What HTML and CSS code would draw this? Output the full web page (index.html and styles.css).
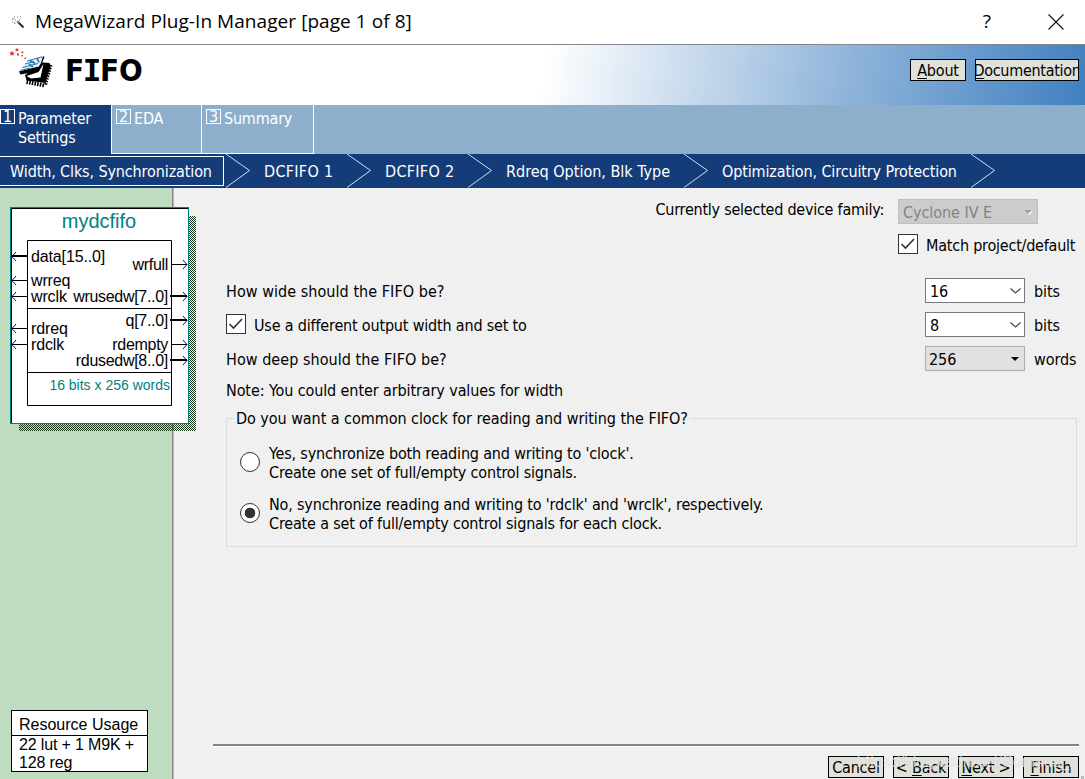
FILE: index.html
```html
<!DOCTYPE html>
<html lang="en">
<head>
    <meta charset="UTF-8">
    <meta name="viewport" content="width=device-width, initial-scale=1.0">
    <title>MegaWizard Plug-In Manager</title>
    <link rel="stylesheet" href="styles.css">
</head>
<body>

    <div class="titlebar">
        <svg class="wand" width="14" height="14" viewBox="0 0 14 14">
            <path d="M5.5 6.500L11.500 12.500" stroke="#222" stroke-width="1.8"/>
            <path d="M5 6l2 2" stroke="#999966" stroke-width="1.4"/>
            <path d="M0 4h2M3 5h1M2 8h1.500M0 7h1M7 5h1M8 2h1M5 2h1M2 2h1" stroke="#865" stroke-width="1.200"/>
        </svg>
        <span class="title">MegaWizard Plug-In Manager [page 1 of 8]</span>
        <span class="help">?</span>
        <svg class="close" width="16" height="16" viewBox="0 0 16 16">
            <path d="M.5 .5l15 15M15.5 .5l-15 15" stroke="#111" stroke-width="1.1"/>
        </svg>
    </div>

    <div class="header">
        <svg class="logo" width="48" height="46" viewBox="0 0 48 46">
            <g fill="#d93a20">
                <path d="M4 2.500l.8 1.900 2 .2-1.500 1.300.5 2L4 6.800l-1.800 1.100.5-2-1.500-1.300 2-.2z"/>
                <path d="M9 -.5l.6 1.500 1.500.1-1.100 1 .3 1.600-1.300-.9-1.400.9.3-1.600-1.100-1 1.600-.1z"/>
                <path d="M9 5.500h2v2H9zM13.500 3.500h1.800v1.800h-1.800zM13.500 7h1.500v1.500h-1.500zM16.500 9.500h1.500v1.500h-1.500z"/>
            </g>
            <path d="M35 14.500l6.500.5 1 3.500-5 16.500-19-2.500-1.500-5.500z" fill="#000"/>
            <path d="M43 17l-5.500 20" stroke="#000" stroke-width="3" stroke-dasharray="1.500 1.200"/>
            <path d="M18.500 34l18 3.500" stroke="#000" stroke-width="4" stroke-dasharray="1.600 1.100"/>
            <path d="M18.500 28l12-4 5-8-3 13.500-9.500 1z" fill="#fff"/>
            <path d="M11 23.500l21-6 3-9.200 1.500.7-5.500 14L12.500 26.500z" fill="#000"/>
            <path d="M18.700 13l16-4.500-3.700 10-19.500 4.500z" fill="#e8f4fb"/>
            <path d="M19 13l15.500-4.300M17 16l9-2.500M14.500 19.500l15.500-4M12.500 22.500l10-2.500" stroke="#2878b0" stroke-width="1.100" fill="none"/>
            <path d="M22 12.500l5 3M29 10l2 4.500M21 16l4 3" stroke="#2878b0" stroke-width="1.800" fill="none"/>
        </svg>
        <h1>F<span class="slab">I</span>FO</h1>
        <div class="header-buttons">
            <button class="btn"><u>A</u>bout</button>
            <button class="btn btn-doc"><u>D</u>ocumentation</button>
        </div>
    </div>

    <div class="tabs">
        <div class="tab tab-active"><span class="num">1</span><span>Parameter<br>Settings</span></div>
        <div class="tab tab-eda"><span class="num">2</span><span>EDA</span></div>
        <div class="tab tab-summary"><span class="num">3</span><span>Summary</span></div>
    </div>

    <div class="steps">
        <div class="step step-active">Width, Clks, Synchronization</div>
        <svg class="arrow" width="25" height="34"><path d="M0 0l23.500 16.500L0 33.500"/></svg>
        <div class="step step-dcfifo">DCFIFO 1</div>
        <svg class="arrow" width="25" height="34"><path d="M0 0l23.500 16.500L0 33.500"/></svg>
        <div class="step step-dcfifo">DCFIFO 2</div>
        <svg class="arrow" width="25" height="34"><path d="M0 0l23.500 16.500L0 33.500"/></svg>
        <div class="step step-rdreq">Rdreq Option, Blk Type</div>
        <svg class="arrow" width="25" height="34"><path d="M0 0l23.500 16.500L0 33.500"/></svg>
        <div class="step step-optim">Optimization, Circuitry Protection</div>
        <svg class="arrow" width="25" height="34"><path d="M0 0l23.500 16.500L0 33.500"/></svg>
    </div>

    <div class="main">
        <div class="sidebar">
            <svg class="block" width="186" height="224" viewBox="10 207 186 224">
                <defs>
                    <pattern id="dots" width="2" height="2" patternUnits="userSpaceOnUse">
                        <path d="M0 0h1v1H0zM1 1h1v1H1z" fill="#1c3a1c"/>
                    </pattern>
                </defs>
                <rect x="19" y="216" width="177" height="215" fill="url(#dots)" shape-rendering="crispEdges"/>
                <rect x="10.5" y="207.5" width="178" height="216" fill="#fff" stroke="#008080"/>
                <path d="M11.500 423V208.500H188" fill="none" stroke="#000"/>
                <text class="name" x="99" y="228" text-anchor="middle">mydcfifo</text>
                <g fill="none" stroke="#000">
                    <path d="M27.500 240.500h144v165h-144zM27.500 308.500h144M27.500 372.500h144"/>
                    <path d="M12 280.500h15M12 296.500h15M12 328.500h15M12 344.500h15M172 264.500h15M172 344.500h15"/>
                    <path d="M12 256h15M170 296h17M170 320h17M170 360h17" stroke-width="2"/>
                </g>
                <g class="heads">
                    <path d="M16 252l-4 4.500 4 4.500M16 276l-4 4.500 4 4.500M16 292l-4 4.500 4 4.500M16 324l-4 4.500 4 4.500M16 340l-4 4.500 4 4.500"/>
                    <path d="M183 260l4 4.500-4 4.500M183 292l4 4.500-4 4.500M183 316l4 4.500-4 4.500M183 340l4 4.500-4 4.500M183 356l4 4.500-4 4.500"/>
                </g>
                <g class="inputs">
                    <text x="31" y="262">data[15..0]</text>
                    <text x="31" y="286">wrreq</text>
                    <text x="31" y="302">wrclk</text>
                    <text x="31" y="334">rdreq</text>
                    <text x="31" y="350">rdclk</text>
                </g>
                <g class="outputs" text-anchor="end">
                    <text x="168" y="270">wrfull</text>
                    <text x="168" y="302">wrusedw[7..0]</text>
                    <text x="168" y="326">q[7..0]</text>
                    <text x="168" y="350">rdempty</text>
                    <text x="168" y="366">rdusedw[8..0]</text>
                </g>
                <text class="size" x="170" y="390" text-anchor="end">16 bits x 256 words</text>
            </svg>
            <div class="usage">
                <div class="usage-title">Resource Usage</div>
                <div class="usage-text">22 lut + 1 M9K +<br>128 reg</div>
            </div>
        </div>

        <div class="content">
            <div class="family">
                <span class="family-label">Currently selected device family:</span>
                <div class="select select-disabled">Cyclone IV E
                    <svg width="9" height="5"><path d="M1 1h8L5 5z" fill="#fff"/><path d="M0 0h8L4 4z" fill="#a0a0a0"/></svg>
                </div>
            </div>
            <div class="match">
                <svg class="check" width="20" height="20"><rect x=".5" y=".5" width="19" height="19"/><path d="M3.500 10l4 4 8.500-9"/></svg>
                <span>Match project/default</span>
            </div>

            <div class="row">
                <span class="question">How wide should the FIFO be?</span>
                <div class="select">16
                    <svg width="11" height="6"><path d="M.5 .5l5 4.500 5-4.500" fill="none" stroke="#444" stroke-width="1.200"/></svg>
                </div>
                <span class="unit">bits</span>
            </div>
            <div class="row">
                <svg class="check" width="20" height="20"><rect x=".5" y=".5" width="19" height="19"/><path d="M3.500 10l4 4 8.500-9"/></svg>
                <span class="question question-tight">Use a different output width and set to</span>
                <div class="select">8
                    <svg width="11" height="6"><path d="M.5 .5l5 4.500 5-4.500" fill="none" stroke="#444" stroke-width="1.200"/></svg>
                </div>
                <span class="unit">bits</span>
            </div>
            <div class="row">
                <span class="question">How deep should the FIFO be?</span>
                <div class="select select-list">256
                    <svg width="8" height="4"><path d="M0 0h8L4 4z"/></svg>
                </div>
                <span class="unit">words</span>
            </div>
            <p class="note">Note: You could enter arbitrary values for width</p>

            <fieldset>
                <legend>Do you want a common clock for reading and writing the FIFO?</legend>
                <div class="option">
                    <span class="radio"></span>
                    <span class="option-text">Yes, synchronize both reading and writing to 'clock'.<br>Create one set of full/empty control signals.</span>
                </div>
                <div class="option">
                    <span class="radio radio-on"></span>
                    <span class="option-text">No, synchronize reading and writing to 'rdclk' and 'wrclk', respectively.<br>Create a set of full/empty control signals for each clock.</span>
                </div>
            </fieldset>

            <div class="footer">
                <button class="btn">Cancel</button>
                <button class="btn">&lt; <u>B</u>ack</button>
                <button class="btn"><u>N</u>ext &gt;</button>
                <button class="btn"><u>F</u>inish</button>
                <span class="watermark">https://blog.csdn.net/Somnus_z</span>
                <span class="grip"></span>
            </div>
        </div>
    </div>

</body>
</html>
```
FILE: styles.css
```css
* {
    box-sizing: border-box;
}
body {
    margin: 0;
    height: 779px;
    overflow: hidden;
    display: flex;
    flex-direction: column;
    font-family: "DejaVu Sans Condensed", Tahoma, sans-serif;
    font-size: 16px;
    line-height: 19px;
    letter-spacing: -0.05px;
    color: #000;
    background: #f0f0f0;
}
svg {
    flex: none;
}
.titlebar {
    height: 45px;
    flex: none;
    display: flex;
    align-items: center;
    padding: 0 21px 1px 12px;
    background: #fff;
    border-bottom: 1px solid #82868c;
    font-family: "Open Sans", sans-serif;
    font-size: 19px;
    letter-spacing: 0.06px;
}
.title {
    margin-left: 9px;
}
.help {
    margin-left: auto;
    margin-right: 57px;
}
.header {
    height: 60px;
    flex: none;
    display: flex;
    background: linear-gradient(100deg, #fff 50%, #8fb4da 78%, #4080c0 100%);
}
.logo {
    margin: 3px 0 0 8px;
}
h1 {
    margin: 6px 0 0 9px;
    font-size: 31px;
    line-height: 38px;
    letter-spacing: 0.1px;
}
.slab {
    font-family: "DejaVu Sans Mono", monospace;
    margin: 0 -1.5px;
}
.header-buttons {
    margin: 14px 6px 0 auto;
    display: flex;
    gap: 9px;
}
.btn {
    display: flex;
    justify-content: center;
    align-items: center;
    width: 56px;
    height: 22px;
    padding: 0;
    border: 1px solid #000;
    background: #e0e2da;
    color: #000;
    font: inherit;
    letter-spacing: -0.2px;
    white-space: pre;
    overflow: hidden;
}
.btn u {
    text-underline-offset: 2px;
}
.btn-doc {
    width: 104px;
    letter-spacing: -0.3px;
}
.tabs {
    height: 49px;
    flex: none;
    display: flex;
    background: #8dafcc;
    color: #fff;
    letter-spacing: -0.2px;
}
.tab {
    display: flex;
    align-items: flex-start;
    gap: 3px;
    padding: 4px 0 0 4px;
    border: solid #fff;
    border-width: 0 1px 1px 0;
}
.tab-active {
    width: 112px;
    padding-left: 0;
    background: #143c78;
    border-bottom: none;
}
.tab-eda {
    width: 90px;
}
.tab-summary {
    width: 112px;
}
.num {
    width: 15px;
    height: 15px;
    border: 1px solid #fff;
    line-height: 14px;
    text-align: center;
}
.steps {
    height: 34px;
    flex: none;
    display: flex;
    align-items: center;
    background: #143c78;
    color: #fff;
}
.step {
    white-space: nowrap;
    padding-left: 13px;
}
.step-active {
    width: 224px;
    height: 30px;
    padding: 5px 0 0 10px;
    margin-right: 2px;
    border: 1px solid #fff;
    border-left: none;
    letter-spacing: -0.12px;
}
.step-dcfifo {
    width: 96px;
    letter-spacing: 0.3px;
}
.step-rdreq {
    width: 191px;
    letter-spacing: 0;
}
.step-optim {
    width: 262px;
    letter-spacing: -0.13px;
}
.arrow path {
    fill: none;
    stroke: #d5dfec;
}
.main {
    flex: 1;
    display: flex;
    min-height: 0;
}
.sidebar {
    width: 174px;
    flex: none;
    display: flex;
    flex-direction: column;
    justify-content: space-between;
    align-items: flex-start;
    padding: 19px 0 7px 10px;
    background: #c0dcc0;
    border-right: 1px solid #b8b8b8;
    box-shadow: inset -1px 0 #888;
    font-family: "Liberation Sans", Arial, sans-serif;
    letter-spacing: 0;
}
.name {
    font-size: 20px;
    fill: #008080;
}
.size {
    font-size: 14px;
    fill: #008080;
}
.inputs {
    letter-spacing: -0.13px;
}
.outputs {
    letter-spacing: -0.3px;
}
.heads path {
    fill: none;
    stroke: #0000c0;
}
.usage {
    width: 137px;
    margin-left: 1px;
    border: 1px solid #000;
    background: #fff;
}
.usage-title {
    height: 25px;
    padding: 4px 0 0 7px;
    border-bottom: 1px solid #000;
}
.usage-text {
    height: 35px;
    padding-left: 7px;
    line-height: 18px;
    letter-spacing: -0.15px;
}
.content {
    flex: 1;
    display: flex;
    flex-direction: column;
    padding: 11px 6px 0 39px;
}
.family {
    display: flex;
    justify-content: flex-end;
    padding-right: 41px;
    margin-bottom: 10px;
}
.family-label {
    margin: 1px 14px 0 0;
    letter-spacing: -0.24px;
}
.select {
    width: 100px;
    height: 25px;
    flex: none;
    display: flex;
    align-items: center;
    justify-content: space-between;
    padding: 1px 3px 0 4px;
    border: 1px solid #7a7a7a;
    background: #fff;
}
.select-disabled {
    width: 140px;
    padding-right: 4px;
    background: #ccc;
    border-color: #bfbfbf;
    color: #838383;
}
.select-list {
    background: #e1e1e1;
    border-color: #adadad;
    padding: 1px 5px 0 3px;
}
.match {
    display: flex;
    align-items: center;
    gap: 8px;
    margin: 0 0 24px 685px;
    white-space: nowrap;
    letter-spacing: -0.22px;
}
.match span {
    padding-top: 2px;
    height: 20px;
}
.check rect {
    fill: #fff;
    stroke: #333;
}
.check path {
    fill: none;
    stroke: #333;
    stroke-width: 1.6;
}
.row {
    display: flex;
    align-items: center;
    gap: 8px;
    height: 25px;
    margin: 0 0 9px 13px;
}
.row .check {
    margin-bottom: 2px;
}
.question {
    flex: 1;
    padding-top: 2px;
    letter-spacing: 0.05px;
}
.question-tight {
    letter-spacing: -0.18px;
}
.unit {
    width: 45px;
    margin-left: 1px;
    padding-top: 2px;
    white-space: nowrap;
    letter-spacing: -0.1px;
}
.note {
    margin: 1px 0 8px 13px;
    letter-spacing: -0.1px;
}
fieldset {
    height: 139px;
    margin: 0 2px 0 13px;
    padding: 16px 0 0 13px;
    border: 1px solid #dcdcdc;
}
legend {
    margin-left: -6px;
    padding: 1px 2px 0;
    margin-bottom: -1px;
}
.option {
    display: flex;
    align-items: center;
    gap: 9px;
    margin-bottom: 13px;
    letter-spacing: -0.17px;
}
.option-text {
    position: relative;
    top: 1px;
}
.radio {
    width: 20px;
    height: 20px;
    border: 1px solid #333;
    border-radius: 50%;
    background: #fff;
}
.radio-on {
    background: radial-gradient(circle, #333 5px, #fff 5.600px);
}
.footer {
    position: relative;
    display: flex;
    justify-content: flex-end;
    gap: 9px;
    height: 35px;
    margin-top: auto;
    padding-top: 10px;
    border-top: 2px solid #838383;
    box-shadow: inset 0 1px #fff;
}
.watermark {
    position: absolute;
    right: 2px;
    top: 6px;
    font-family: "Liberation Sans", Arial, sans-serif;
    font-size: 16px;
    letter-spacing: -0.1px;
    color: rgba(255, 255, 255, 0.65);
    text-shadow: 0 0 1px rgba(120, 120, 120, 0.35);
}
.grip {
    position: absolute;
    right: -5px;
    bottom: 0;
    width: 3px;
    height: 3px;
    background: #bbb;
}
```
